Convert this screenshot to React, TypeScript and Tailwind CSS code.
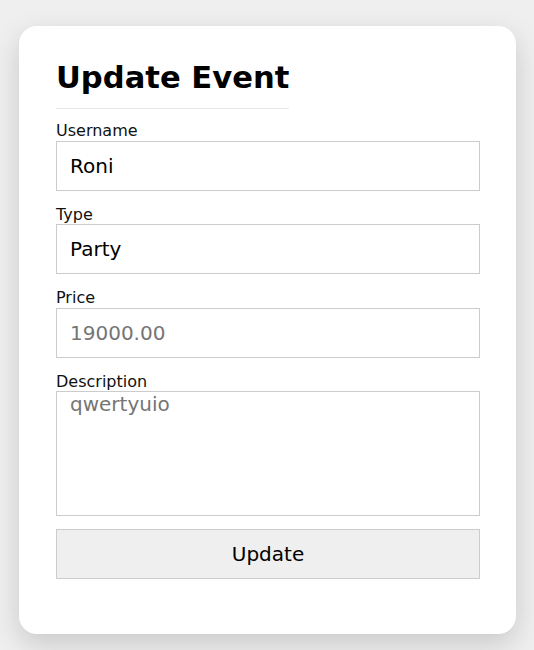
export default function App() {
  const fields = [
    { label: "Username", value: "Roni", placeholder: "" },
    { label: "Type", value: "Party", placeholder: "" },
    { label: "Price", value: "", placeholder: "19000.00" },
  ];

  return (
    <div className="min-h-[650px] bg-[#efefef] pt-[26px] pl-[19px] font-['DejaVu_Sans',sans-serif]">
      <div className="w-[497px] h-[608px] bg-white rounded-[18px] shadow-[0_10px_28px_rgba(0,0,0,0.16)] pl-[37px] pr-[36px] pt-[34px]">
        <h2 className="inline-block text-[30.6px] leading-[35px] font-bold text-black pb-[13px] border-b border-[#e6e6e6]">
          Update Event
        </h2>

        <form className="mt-[12px] flex flex-col">
          {fields.map((f) => (
            <div key={f.label} className="mb-[14px]">
              <label className="block text-[16px] leading-[19.5px] text-[#111]">{f.label}</label>
              <input
                defaultValue={f.value}
                placeholder={f.placeholder}
                className="block w-full h-[50px] border border-[#cccccc] px-[13px] text-[20px] text-black placeholder:text-[#757575] outline-none"
              />
            </div>
          ))}

          <div className="mb-[13px]">
            <label className="block text-[16px] leading-[19.5px] text-[#111]">Description</label>
            <textarea
              placeholder="qwertyuio"
              className="block w-full h-[125px] border border-[#cccccc] px-[13px] py-px text-[20px] leading-[23px] text-black placeholder:text-[#757575] outline-none resize-none"
            />
          </div>

          <button
            type="button"
            className="w-full h-[50px] bg-[#efefef] border border-[#cccccc] text-[20px] text-black"
          >
            Update
          </button>
        </form>
      </div>
    </div>
  );
}
